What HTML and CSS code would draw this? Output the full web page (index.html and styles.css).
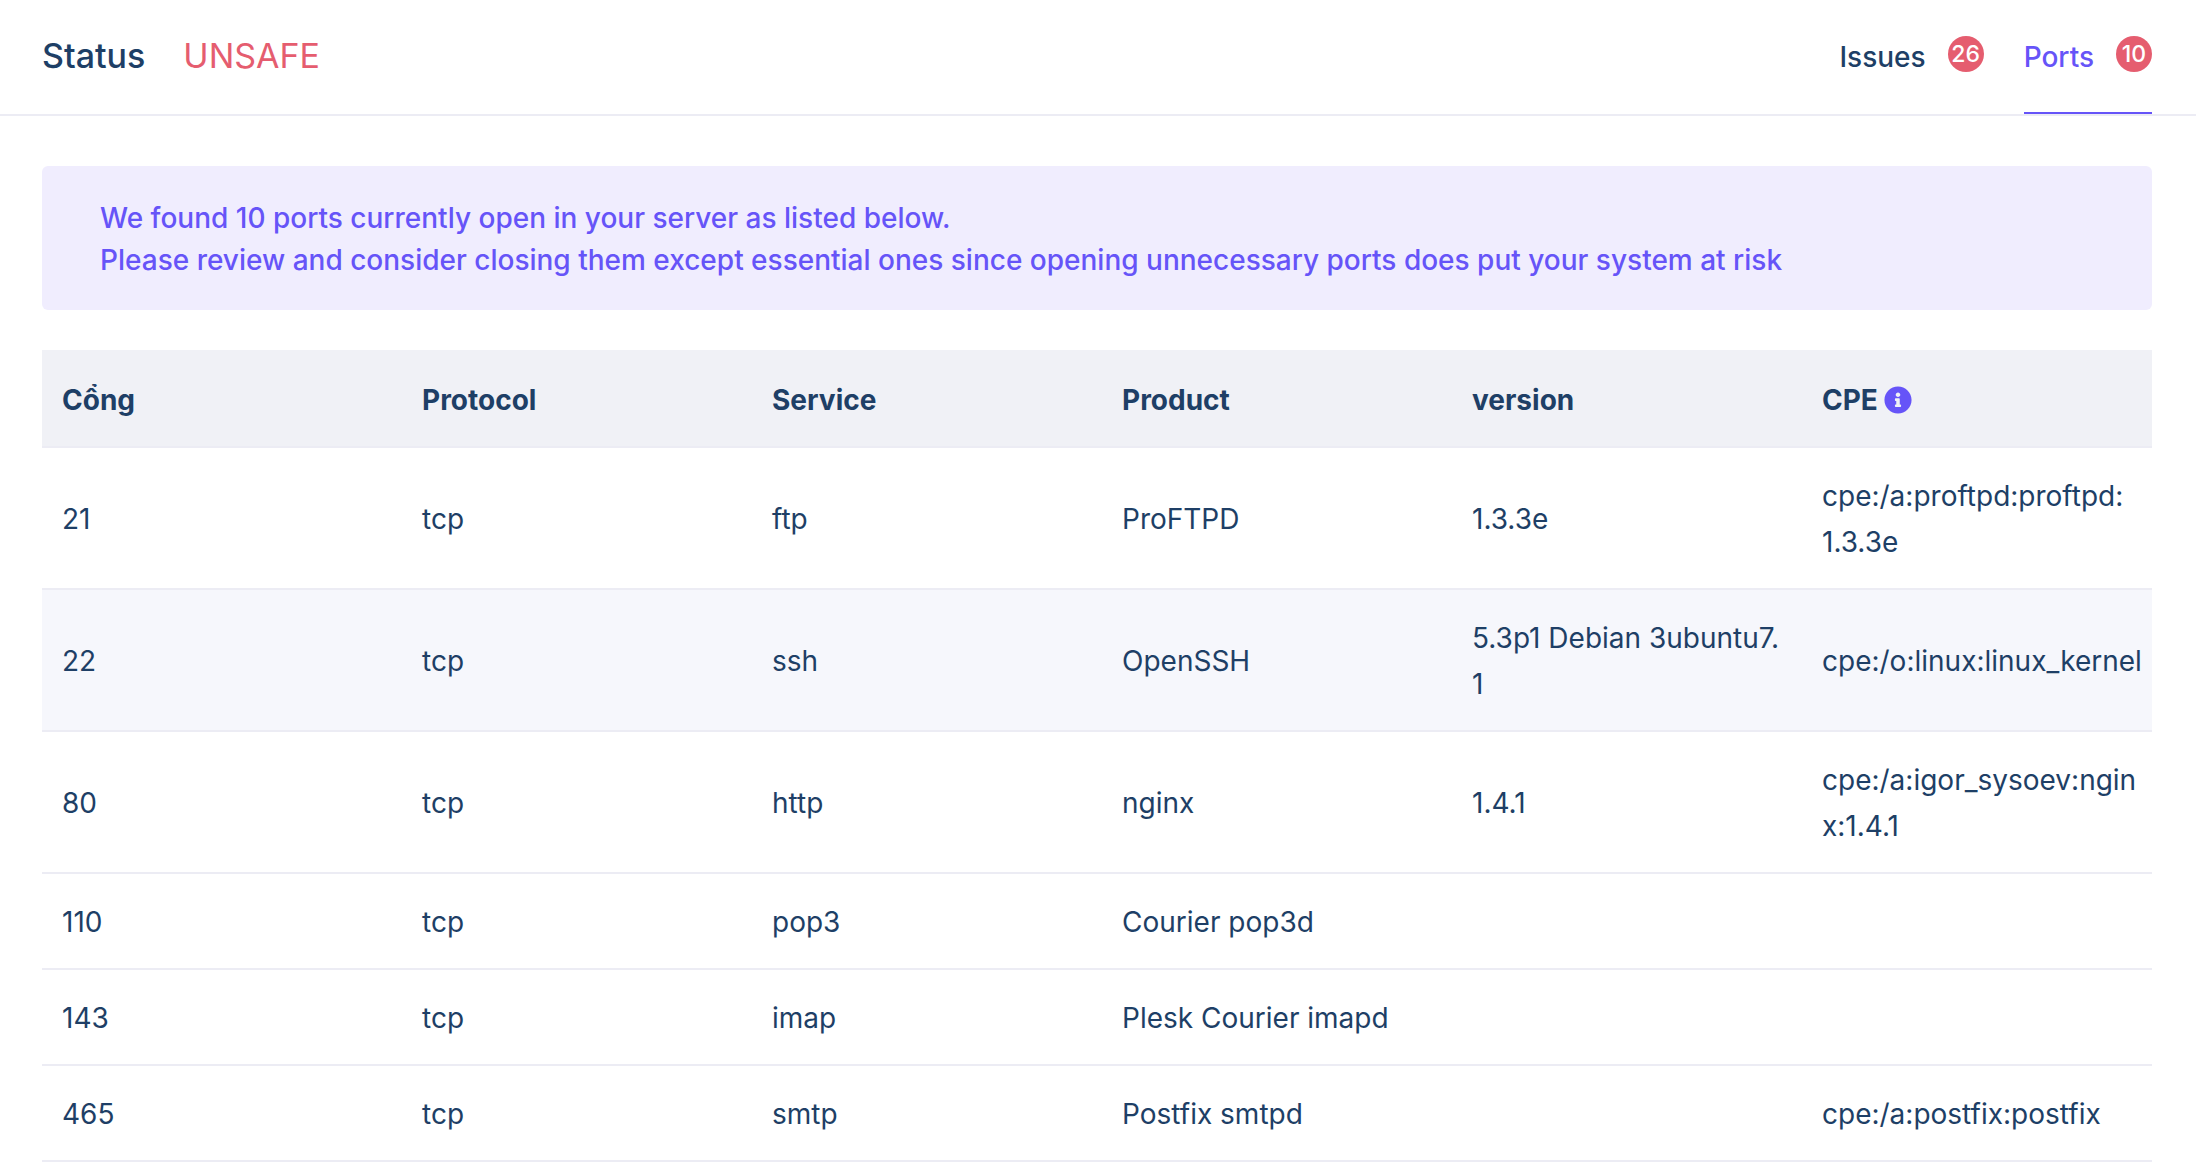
FILE: index.html
```html
<!DOCTYPE html>
<html lang="en">
<head>
  <meta charset="utf-8">
  <meta name="viewport" content="width=device-width, initial-scale=1">
  <title>Open ports</title>
  <link rel="stylesheet" href="styles.css">
</head>
<body>
  <header class="header">
    <h1 class="status">Status <span class="status-value">UNSAFE</span></h1>
    <nav class="tabs">
      <a class="tab" href="#issues">Issues <span class="badge">26</span></a>
      <a class="tab tab-active" href="#ports" aria-current="page">Ports <span class="badge">10</span></a>
    </nav>
  </header>
  <main class="content">
    <p class="notice">We found 10 ports currently open in your server as listed below.<br>Please review and consider closing them except essential ones since opening unnecessary ports does put your system at risk</p>
    <table class="ports">
      <thead>
        <tr>
          <th class="col-port" scope="col">Cổng</th>
          <th scope="col">Protocol</th>
          <th scope="col">Service</th>
          <th scope="col">Product</th>
          <th scope="col">version</th>
          <th scope="col"><span class="with-icon">CPE
            <svg class="info" viewBox="0 0 512 512" aria-hidden="true"><path d="M256 8C119.043 8 8 119.083 8 256c0 136.997 111.043 248 248 248s248-111.003 248-248C504 119.083 392.957 8 256 8zm0 110c23.196 0 42 18.804 42 42s-18.804 42-42 42-42-18.804-42-42 18.804-42 42-42zm56 254c0 6.627-5.373 12-12 12h-88c-6.627 0-12-5.373-12-12v-24c0-6.627 5.373-12 12-12h12v-64h-12c-6.627 0-12-5.373-12-12v-24c0-6.627 5.373-12 12-12h64c6.627 0 12 5.373 12 12v100h12c6.627 0 12 5.373 12 12v24z"/></svg></span></th>
        </tr>
      </thead>
      <tbody>
        <tr><td>21</td><td>tcp</td><td>ftp</td><td>ProFTPD</td><td>1.3.3e</td><td class="cpe">cpe:/a:proftpd:proftpd:<br>1.3.3e</td></tr>
        <tr class="row-hover"><td>22</td><td>tcp</td><td>ssh</td><td>OpenSSH</td><td>5.3p1 Debian 3ubuntu7.1</td><td class="cpe">cpe:/o:linux:linux_kernel</td></tr>
        <tr><td>80</td><td>tcp</td><td>http</td><td>nginx</td><td>1.4.1</td><td class="cpe">cpe:/a:igor_sysoev:ngin<br>x:1.4.1</td></tr>
        <tr><td>110</td><td>tcp</td><td>pop3</td><td>Courier pop3d</td><td></td><td></td></tr>
        <tr><td>143</td><td>tcp</td><td>imap</td><td>Plesk Courier imapd</td><td></td><td></td></tr>
        <tr><td>465</td><td>tcp</td><td>smtp</td><td>Postfix smtpd</td><td></td><td class="cpe">cpe:/a:postfix:postfix</td></tr>
      </tbody>
    </table>
  </main>
</body>
</html>
```
FILE: styles.css
```css
* {
  box-sizing: border-box;
}

body {
  margin: 0;
  background: #fff;
  color: #1e3f66;
  font-family: Inter, "Noto Sans", sans-serif;
  font-size: 28px;
  line-height: 46px;
}

.header {
  display: flex;
  justify-content: space-between;
  padding: 0 44px 0 42px;
  border-bottom: 2px solid #ececf4;
}

.status {
  display: flex;
  gap: 38px;
  margin: 0;
  padding: 33px 0 31px;
  font-size: 34px;
  font-weight: 500;
}

.status-value {
  color: #e55d6f;
  font-weight: 400;
}

.tabs {
  display: flex;
  gap: 40px;
}

.tab {
  display: flex;
  gap: 22px;
  padding: 34px 0 32px;
  border-bottom: 2px solid transparent;
  color: inherit;
  font-weight: 450;
  text-decoration: none;
}

.tab-active {
  border-color: #6654f8;
  color: #6654f8;
}

.badge {
  width: 36px;
  height: 36px;
  margin-top: 2px;
  border-radius: 50%;
  background: #e55d6f;
  color: #fff;
  font-size: 23px;
  line-height: 36px;
  text-align: center;
}

.content {
  padding: 50px 44px 0 42px;
}

.notice {
  margin: 0 0 40px;
  padding: 31px 58px 29px;
  border-radius: 6px;
  background: #f0edfe;
  color: #6654f8;
  font-weight: 450;
  line-height: 42px;
}

.ports {
  width: 100%;
  border-collapse: separate;
  border-spacing: 0;
  table-layout: fixed;
}

.ports th,
.ports td {
  padding: 25px 20px 23px;
  border-bottom: 2px solid #ececf4;
  text-align: left;
  vertical-align: middle;
  word-break: break-all;
}

.ports th {
  padding: 27px 20px 23px;
  background: #f0f1f6;
  font-weight: 700;
}

.ports .col-port {
  width: 360px;
}

.ports .cpe {
  padding-right: 8px;
}

.row-hover {
  background: #f6f7fc;
}

.with-icon {
  display: flex;
  align-items: center;
  gap: 6px;
}

.info {
  width: 28px;
  height: 28px;
  fill: #6654f8;
}
```
